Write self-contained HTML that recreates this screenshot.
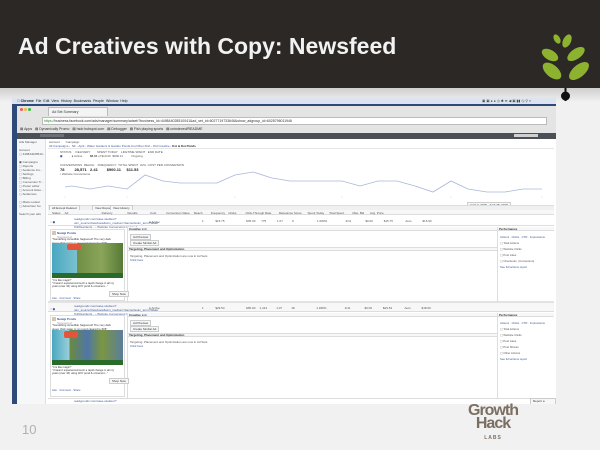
<!DOCTYPE html>
<html><head><meta charset="utf-8"><style>
*{margin:0;padding:0;box-sizing:border-box}
body{width:600px;height:450px;overflow:hidden;background:#f1f1f1;font-family:"Liberation Sans",sans-serif;position:relative}
.a{position:absolute}
.t{font-size:3.5px;color:#555;white-space:nowrap}
.b{color:#3b5998}
.btn{border:1px solid #ccc;background:#f6f7f8;font-size:3px;padding:0 2px;color:#333}
</style></head><body>
<div class="a" style="left:0;top:0;width:600px;height:88px;background:#2c2825"></div>
<div class="a" style="left:0;top:88px;width:600px;height:14px;background:linear-gradient(#cfcfcf,#f1f1f1)"></div>
<div class="a" style="left:18px;top:33px;font-size:23px;font-weight:bold;color:#f2f2f2">Ad Creatives with Copy: Newsfeed</div>
<svg class="a" style="left:536px;top:28px" width="60" height="76" viewBox="0 0 60 76">
<ellipse cx="21" cy="11" rx="3" ry="5" transform="rotate(-30 21 11)" fill="#8cb22f"/>
<ellipse cx="31" cy="13" rx="4" ry="7" transform="rotate(25 31 13)" fill="#8cb22f"/>
<ellipse cx="14" cy="27" rx="9" ry="5" transform="rotate(30 14 27)" fill="#8cb22f"/>
<ellipse cx="40" cy="26" rx="10" ry="5" transform="rotate(-35 40 26)" fill="#8cb22f"/>
<ellipse cx="16" cy="43" rx="11" ry="6" transform="rotate(40 16 43)" fill="#8cb22f"/>
<ellipse cx="43" cy="43" rx="12" ry="6" transform="rotate(-40 43 43)" fill="#8cb22f"/>
<rect x="28.5" y="60" width="2" height="13" fill="#111"/>
<circle cx="29.5" cy="68" r="4.5" fill="#111"/>
</svg>
<div class="a" style="left:12px;top:98px;width:544px;height:306px;background:#fff;overflow:hidden">
 <div class="a" style="left:0;top:0;width:544px;height:6px;background:#dde3ef"></div>
 <div class="a t" style="left:5px;top:1px;font-size:3.5px;color:#222">&#63743; <b>Chrome</b> &nbsp;File &nbsp;Edit &nbsp;View &nbsp;History &nbsp;Bookmarks &nbsp;People &nbsp;Window &nbsp;Help</div>
 <div class="a t" style="left:470px;top:1px;color:#444">▣ ▣ ● ● ◷ ✱ ≋ ◀ ▣ ▮▮ ◷ ⚲ ≡</div>
 <div class="a" style="left:0;top:6px;width:544px;height:2px;background:#2e4a78"></div>
 <div class="a" style="left:0;top:8px;width:5px;height:298px;background:#2e4a78"></div>
 <div class="a" style="left:5px;top:8px;width:539px;height:27px;background:#e4e4e4"></div>
 <div class="a" style="left:8px;top:10px;width:3px;height:3px;border-radius:50%;background:#f15c55"></div>
 <div class="a" style="left:12px;top:10px;width:3px;height:3px;border-radius:50%;background:#f8b830"></div>
 <div class="a" style="left:16px;top:10px;width:3px;height:3px;border-radius:50%;background:#2cc23f"></div>
 <div class="a" style="left:36px;top:9px;width:60px;height:9px;background:#f4f4f4;border:1px solid #bbb;border-bottom:none"></div>
 <div class="a t" style="left:40px;top:12px;color:#333">Ad Set Summary</div>
 <div class="a" style="left:30px;top:19px;width:505px;height:8px;background:#fff;border:1px solid #bbb"></div>
 <div class="a t" style="left:32px;top:21px;color:#333"><span style="color:#2a8a2a">https://</span>business.facebook.com/ads/manager/summary/adset/?business_id=449844028510041&amp;ad_set_id=6027719733646&amp;show_adgroup_id=6028796011946</div>
 <div class="a t" style="left:8px;top:29px;color:#333">▤ Apps &nbsp; ▤ Dynamically Promo &nbsp; ▤ hsdr.hubspot.com &nbsp; ▤ Debugger &nbsp; ▤ Fish playing sports &nbsp; ▤ unindexed/README</div>
 <div class="a" style="left:5px;top:35px;width:539px;height:6px;background:#4b4f56"></div>
 <div class="a" style="left:28px;top:36px;width:24px;height:3px;background:#6b6f76"></div>
 <div class="a" style="left:502px;top:36px;width:24px;height:3px;background:#d0d0d0"></div>
 <div class="a" style="left:5px;top:41px;width:29px;height:265px;background:#f6f7f9;border-right:1px solid #dfe0e4"></div>
 <div class="a t" style="left:7px;top:42px;font-size:3px">Ads Manager<br><br>Account<br>▢ 449844028510...<br><br>▣ Campaigns<br>▢ Reports<br>▢ Audience Ins...<br>▢ Settings<br>▢ Billing<br>▢ Conversion Tr...<br>▢ Power editor<br>▢ Account Histo...<br>▢ Audiences<br><br>▢ Mass Lookal<br>▢ Advertiser Su<br><br>Search your ads</div>
 <div class="a t" style="left:37px;top:42px;font-size:3px">Account &nbsp;&nbsp;&nbsp;&nbsp;&nbsp;&nbsp;Campaign<br><span class="b">All Campaigns › &nbsp;NF - April - Water Gardens &amp; Garden Ponds,Koi,Other Fish - Old Creative ›</span> <b style="color:#222">Koi &amp; Koi Ponds</b></div>
 <div class="a" style="left:36px;top:50px;width:506px;height:1px;background:#e5e5e5"></div>
 <div class="a t" style="left:48px;top:52px;font-size:3px">STATUS &nbsp;&nbsp;&nbsp;&nbsp;DELIVERY &nbsp;&nbsp;&nbsp;&nbsp;&nbsp;&nbsp;&nbsp;SPENT TODAY &nbsp;&nbsp;&nbsp;LIFETIME SPENT &nbsp;&nbsp;END DATE<br><span style="color:#3b5998">◼</span> &nbsp;&nbsp;&nbsp;&nbsp;&nbsp;&nbsp;&nbsp;&nbsp;&nbsp;&nbsp;● Active &nbsp;&nbsp;&nbsp;&nbsp;&nbsp;&nbsp;&nbsp;&nbsp;<b>$8.04</b> of $10.00 &nbsp;$900.11 &nbsp;&nbsp;&nbsp;&nbsp;&nbsp;&nbsp;&nbsp;&nbsp;&nbsp;Ongoing</div>
 <div class="a t" style="left:48px;top:65px;font-size:3px">CONVERSIONS &nbsp;REACH &nbsp;&nbsp;&nbsp;FREQUENCY &nbsp;TOTAL SPENT &nbsp;AVG. COST PER CONVERSION<br><b style="font-size:4px;color:#222">78 &nbsp;&nbsp;&nbsp;&nbsp;&nbsp;&nbsp;&nbsp;&nbsp;28,571 &nbsp;&nbsp;2.41 &nbsp;&nbsp;&nbsp;&nbsp;&nbsp;&nbsp;&nbsp;$900.11 &nbsp;&nbsp;&nbsp;&nbsp;$11.53</b><br>• Website Conversions</div>
 <div class="a btn" style="left:455px;top:104px">April 2, 2015 - April 28, 2015</div>
 <svg class="a" style="left:0;top:0" width="544" height="306">
  <polyline fill="none" stroke="#a9b6da" stroke-width="0.8" points="53,89 60,88 78,91 96,88 115,91 133,77 151,83 168,85 186,85 205,85 223,77 241,74 260,80 278,83 288,83 313,83 330,83 348,88 366,83 385,83 403,88 421,94 439,83 456,91 475,94 493,94 511,91 530,91"/>
  <g fill="#ccc"><circle cx="53" cy="99" r=".5"/><circle cx="115" cy="99" r=".5"/><circle cx="223" cy="99" r=".5"/><circle cx="330" cy="99" r=".5"/><circle cx="439" cy="99" r=".5"/><circle cx="530" cy="99" r=".5"/></g>
 </svg>
 <div class="a" style="left:36px;top:107px;width:506px;height:5px;background:#f0f0f0;border-top:1px solid #ddd"></div>
 <div class="a btn" style="left:37px;top:107px">All Except Deleted</div>
 <div class="a btn" style="left:80px;top:107px">View Report</div>
 <div class="a btn" style="left:98px;top:107px">View History</div>
 <div class="a" style="left:36px;top:112px;width:506px;height:5px;background:#f6f7f8;border-bottom:1px solid #ddd"></div>
 <div class="a t" style="left:40px;top:112.5px;font-size:3px">Status &nbsp;&nbsp;&nbsp;&nbsp;Ad &nbsp;&nbsp;&nbsp;&nbsp;&nbsp;&nbsp;&nbsp;&nbsp;&nbsp;&nbsp;&nbsp;&nbsp;&nbsp;&nbsp;&nbsp;&nbsp;&nbsp;&nbsp;&nbsp;&nbsp;&nbsp;&nbsp;&nbsp;&nbsp;&nbsp;&nbsp;&nbsp;&nbsp;&nbsp;&nbsp;&nbsp;&nbsp;&nbsp;&nbsp;&nbsp;&nbsp;&nbsp;&nbsp;&nbsp;Delivery &nbsp;&nbsp;&nbsp;&nbsp;&nbsp;&nbsp;&nbsp;&nbsp;&nbsp;&nbsp;&nbsp;&nbsp;&nbsp;&nbsp;&nbsp;&nbsp;&nbsp;Results &nbsp;&nbsp;&nbsp;&nbsp;&nbsp;&nbsp;&nbsp;&nbsp;&nbsp;&nbsp;&nbsp;&nbsp;&nbsp;&nbsp;Cost &nbsp;&nbsp;&nbsp;&nbsp;&nbsp;&nbsp;&nbsp;&nbsp;&nbsp;&nbsp;&nbsp;Conversion Value &nbsp;&nbsp;&nbsp;&nbsp;Reach &nbsp;&nbsp;&nbsp;&nbsp;&nbsp;&nbsp;&nbsp;&nbsp;&nbsp;Frequency &nbsp;&nbsp;&nbsp;Clicks &nbsp;&nbsp;&nbsp;&nbsp;&nbsp;&nbsp;&nbsp;&nbsp;&nbsp;&nbsp;Click-Through Rate &nbsp;&nbsp;&nbsp;&nbsp;&nbsp;&nbsp;&nbsp;&nbsp;Relevance Score &nbsp;&nbsp;&nbsp;&nbsp;&nbsp;&nbsp;Spent Today &nbsp;&nbsp;&nbsp;&nbsp;&nbsp;Total Spent &nbsp;&nbsp;&nbsp;&nbsp;&nbsp;&nbsp;&nbsp;&nbsp;&nbsp;Max. Bid &nbsp;&nbsp;&nbsp;&nbsp;&nbsp;&nbsp;Avg. Price</div>
 <div class="a" style="left:36px;top:118px;width:506px;height:10px;border-bottom:1px solid #ddd"></div>
 <div class="a t b" style="left:62px;top:119px;font-size:3px">readypondz.com/case-studies/?<br>utm_source=facebook&amp;utm_medium=banner&amp;utm_term=Water<br>%20Garden&amp;... › Website Conversions Image 2</div>
 <div class="a t" style="left:38px;top:122px;font-size:3px">○ <span class="b">◼</span></div>
 <div class="a t" style="left:137px;top:122px;font-size:3px">● Active</div>
 <div class="a t" style="left:190px;top:121px;font-size:3px">1 &nbsp;&nbsp;&nbsp;&nbsp;&nbsp;&nbsp;&nbsp;&nbsp;&nbsp;&nbsp;&nbsp;&nbsp;&nbsp;$15.75 &nbsp;&nbsp;&nbsp;&nbsp;&nbsp;&nbsp;&nbsp;&nbsp;&nbsp;&nbsp;&nbsp;&nbsp;&nbsp;&nbsp;&nbsp;&nbsp;&nbsp;&nbsp;&nbsp;&nbsp;&nbsp;&nbsp;&nbsp;&nbsp;&nbsp;$35.00 &nbsp;&nbsp;&nbsp;&nbsp;&nbsp;&nbsp;775 &nbsp;&nbsp;&nbsp;&nbsp;&nbsp;&nbsp;&nbsp;&nbsp;&nbsp;&nbsp;&nbsp;&nbsp;1.07 &nbsp;&nbsp;&nbsp;&nbsp;&nbsp;&nbsp;&nbsp;&nbsp;&nbsp;&nbsp;9 &nbsp;&nbsp;&nbsp;&nbsp;&nbsp;&nbsp;&nbsp;&nbsp;&nbsp;&nbsp;&nbsp;&nbsp;&nbsp;&nbsp;&nbsp;&nbsp;&nbsp;&nbsp;&nbsp;&nbsp;&nbsp;&nbsp;&nbsp;&nbsp;&nbsp;&nbsp;&nbsp;1.083% &nbsp;&nbsp;&nbsp;&nbsp;&nbsp;&nbsp;&nbsp;&nbsp;&nbsp;&nbsp;&nbsp;&nbsp;&nbsp;&nbsp;&nbsp;&nbsp;&nbsp;&nbsp;&nbsp;&nbsp;&nbsp;3/11 &nbsp;&nbsp;&nbsp;&nbsp;&nbsp;&nbsp;&nbsp;&nbsp;&nbsp;&nbsp;&nbsp;&nbsp;&nbsp;&nbsp;&nbsp;&nbsp;$0.00 &nbsp;&nbsp;&nbsp;&nbsp;&nbsp;&nbsp;&nbsp;&nbsp;&nbsp;&nbsp;&nbsp;&nbsp;$15.75 &nbsp;&nbsp;&nbsp;&nbsp;&nbsp;&nbsp;&nbsp;&nbsp;&nbsp;&nbsp;&nbsp;&nbsp;&nbsp;&nbsp;Auto &nbsp;&nbsp;&nbsp;&nbsp;&nbsp;&nbsp;&nbsp;&nbsp;&nbsp;&nbsp;&nbsp;&nbsp;$15.90</div>
 <div class="a" style="left:36px;top:129px;width:506px;height:76px;border-bottom:2px solid #e3e3e3"></div>
 <div class="a" style="left:115px;top:129px;width:1px;height:76px;background:#ddd"></div>
 <div class="a" style="left:485px;top:129px;width:1px;height:76px;background:#ddd"></div>
 <div class="a" style="left:116px;top:129px;width:369px;height:4px;background:#f6f7f8;border-bottom:1px solid #ddd"></div>
 <div class="a t" style="left:117px;top:129px;font-size:3px;color:#333"><b>Creative</b> <span class="b">Edit</span></div>
 <div class="a btn" style="left:118px;top:136px">Ad Preview</div>
 <div class="a btn" style="left:118px;top:142px">Create Similar Ad</div>
 <div class="a" style="left:116px;top:149px;width:369px;height:4px;background:#f6f7f8;border-bottom:1px solid #ddd;border-top:1px solid #ddd"></div>
 <div class="a t" style="left:117px;top:149px;font-size:3px;color:#333"><b>Targeting, Placement and Optimization</b></div>
 <div class="a t" style="left:118px;top:156px;font-size:3px">Targeting, Placement and Optimization are now in Ad Sets<br><span class="b">Click here</span></div>
 <div class="a" style="left:486px;top:129px;width:56px;height:4px;background:#f6f7f8;border-bottom:1px solid #ddd"></div>
 <div class="a t" style="left:487px;top:129px;font-size:3px;color:#333"><b>Performance</b></div>
 <div class="a t" style="left:488px;top:136px;font-size:2.8px;line-height:6px"><span class="b">Actions · Clicks · CTR · Impressions</span><br>▢ Total Actions<br>▢ Website Clicks<br>▢ Post Likes<br>▢ Checkouts &nbsp;(Conversion)<br><span class="b">See full actions report</span></div>
 <div class="a" style="left:38px;top:131px;width:75px;height:72px;border:1px solid #ddd;background:#fff"></div>
 <div class="a" style="left:40px;top:133px;width:4px;height:4px;background:#d8c4b0"></div>
 <div class="a t b" style="left:45px;top:133px;font-size:3px"><b>Nualgi Ponds</b><br><span style="color:#999">Sponsored</span></div>
 <div class="a t" style="left:40px;top:139px;font-size:2.8px;color:#333">"Something incredible happened! The very dark<br>green thick water in my pond cleared to 60ft"</div>
 <div class="a" style="left:40px;top:145px;width:71px;height:35px;background:linear-gradient(90deg,#49a7c0 0,#7cc0d0 35%,#6f8f45 35%,#8aa55a 70%,#567a36 100%)"></div>
 <div class="a" style="left:40px;top:175px;width:71px;height:5px;background:#2a6a2a"></div>
 <div class="a" style="left:55px;top:146px;width:14px;height:6px;background:#e2553a;border-radius:2px"></div>
 <div class="a t" style="left:40px;top:181px;font-size:2.7px;color:#333">"It is like magic!"<br>"I haven't experienced such a rapid change in all my<br>years (over 16) using ANY pond &amp; ornament..."</div>
 <div class="a btn" style="left:97px;top:193px">Shop Now</div>
 <div class="a t b" style="left:40px;top:199px;font-size:2.7px">Like · Comment · Share</div>
 <div class="a" style="left:36px;top:205px;width:506px;height:9px;background:#f7f7f7;border-bottom:1px solid #ddd"></div>
 <div class="a t b" style="left:62px;top:205.5px;font-size:3px">readypondz.com/case-studies/?<br>utm_source=facebook&amp;utm_medium=banner&amp;utm_term=Water<br>%20Garden&amp;... › Website Conversions Image 14</div>
 <div class="a t" style="left:38px;top:209px;font-size:3px">○ <span class="b">◼</span></div>
 <div class="a t" style="left:137px;top:208px;font-size:3px">● Active</div>
 <div class="a t" style="left:190px;top:208px;font-size:3px">1 &nbsp;&nbsp;&nbsp;&nbsp;&nbsp;&nbsp;&nbsp;&nbsp;&nbsp;&nbsp;&nbsp;&nbsp;&nbsp;$29.54 &nbsp;&nbsp;&nbsp;&nbsp;&nbsp;&nbsp;&nbsp;&nbsp;&nbsp;&nbsp;&nbsp;&nbsp;&nbsp;&nbsp;&nbsp;&nbsp;&nbsp;&nbsp;&nbsp;&nbsp;&nbsp;&nbsp;&nbsp;&nbsp;&nbsp;$65.00 &nbsp;&nbsp;&nbsp;&nbsp;1,413 &nbsp;&nbsp;&nbsp;&nbsp;&nbsp;&nbsp;&nbsp;&nbsp;&nbsp;&nbsp;1.07 &nbsp;&nbsp;&nbsp;&nbsp;&nbsp;&nbsp;&nbsp;&nbsp;&nbsp;&nbsp;18 &nbsp;&nbsp;&nbsp;&nbsp;&nbsp;&nbsp;&nbsp;&nbsp;&nbsp;&nbsp;&nbsp;&nbsp;&nbsp;&nbsp;&nbsp;&nbsp;&nbsp;&nbsp;&nbsp;&nbsp;&nbsp;&nbsp;&nbsp;&nbsp;&nbsp;1.189% &nbsp;&nbsp;&nbsp;&nbsp;&nbsp;&nbsp;&nbsp;&nbsp;&nbsp;&nbsp;&nbsp;&nbsp;&nbsp;&nbsp;&nbsp;&nbsp;&nbsp;&nbsp;&nbsp;&nbsp;&nbsp;4/11 &nbsp;&nbsp;&nbsp;&nbsp;&nbsp;&nbsp;&nbsp;&nbsp;&nbsp;&nbsp;&nbsp;&nbsp;&nbsp;&nbsp;&nbsp;&nbsp;$0.00 &nbsp;&nbsp;&nbsp;&nbsp;&nbsp;&nbsp;&nbsp;&nbsp;&nbsp;&nbsp;&nbsp;&nbsp;$29.54 &nbsp;&nbsp;&nbsp;&nbsp;&nbsp;&nbsp;&nbsp;&nbsp;&nbsp;&nbsp;&nbsp;&nbsp;&nbsp;&nbsp;Auto &nbsp;&nbsp;&nbsp;&nbsp;&nbsp;&nbsp;&nbsp;&nbsp;&nbsp;&nbsp;&nbsp;&nbsp;$18.60</div>
 <div class="a" style="left:36px;top:215px;width:506px;height:86px;border-bottom:1px solid #ddd"></div>
 <div class="a" style="left:115px;top:215px;width:1px;height:86px;background:#ddd"></div>
 <div class="a" style="left:485px;top:215px;width:1px;height:86px;background:#ddd"></div>
 <div class="a" style="left:116px;top:215px;width:369px;height:4px;background:#f6f7f8;border-bottom:1px solid #ddd"></div>
 <div class="a t" style="left:117px;top:215px;font-size:3px;color:#333"><b>Creative</b> <span class="b">Edit</span></div>
 <div class="a btn" style="left:118px;top:222px">Ad Preview</div>
 <div class="a btn" style="left:118px;top:228px">Create Similar Ad</div>
 <div class="a" style="left:116px;top:235px;width:369px;height:4px;background:#f6f7f8;border-bottom:1px solid #ddd;border-top:1px solid #ddd"></div>
 <div class="a t" style="left:117px;top:235px;font-size:3px;color:#333"><b>Targeting, Placement and Optimization</b></div>
 <div class="a t" style="left:118px;top:242px;font-size:3px">Targeting, Placement and Optimization are now in Ad Sets<br><span class="b">Click here</span></div>
 <div class="a" style="left:486px;top:215px;width:56px;height:4px;background:#f6f7f8;border-bottom:1px solid #ddd"></div>
 <div class="a t" style="left:487px;top:215px;font-size:3px;color:#333"><b>Performance</b></div>
 <div class="a t" style="left:488px;top:222px;font-size:2.8px;line-height:6px"><span class="b">Actions · Clicks · CTR · Impressions</span><br>▢ Total Actions<br>▢ Website Clicks<br>▢ Post Likes<br>▢ Post Shares<br>▢ Other Actions<br><span class="b">See full actions report</span></div>
 <div class="a" style="left:38px;top:217px;width:75px;height:82px;border:1px solid #ddd;background:#fff"></div>
 <div class="a" style="left:40px;top:219px;width:4px;height:4px;background:#d8c4b0"></div>
 <div class="a t b" style="left:45px;top:219px;font-size:3px"><b>Nualgi Ponds</b><br><span style="color:#999">Sponsored</span></div>
 <div class="a t" style="left:40px;top:225px;font-size:2.8px;color:#333">"Something incredible happened! The very dark<br>green thick water in my pond cleared to 60ft"</div>
 <div class="a" style="left:40px;top:232px;width:71px;height:35px;background:linear-gradient(90deg,#49a7c0 0,#9ad0dc 25%,#6b8a3e 25%,#4f76a8 50%,#7a9640 70%,#5b7d9c 100%)"></div>
 <div class="a" style="left:40px;top:262px;width:71px;height:5px;background:#2a6a2a"></div>
 <div class="a" style="left:52px;top:233px;width:14px;height:7px;background:#e2553a;border-radius:2px"></div>
 <div class="a t" style="left:40px;top:268px;font-size:2.7px;color:#333">"It is like magic!"<br>"I haven't experienced such a rapid change in all my<br>years (over 16) using ANY pond &amp; ornament..."</div>
 <div class="a btn" style="left:97px;top:280px">Shop Now</div>
 <div class="a t b" style="left:40px;top:291px;font-size:2.7px">Like · Comment · Share</div>
 <div class="a t b" style="left:62px;top:301px;font-size:3px">readypondz.com/case-studies/?</div>
 <div class="a btn" style="left:518px;top:300px">Report a Problem</div>
</div>
<div class="a" style="left:22px;top:422px;font-size:13px;color:#b0b0b0">10</div>
<div class="a" style="left:464px;top:404px;width:58px;text-align:center;font-size:16px;font-weight:bold;line-height:13px;color:#7b6f62;letter-spacing:-1px">Growth<br>Hack</div>
<div class="a" style="left:464px;top:435px;width:58px;text-align:center;font-size:5px;font-weight:bold;color:#7b6f62;letter-spacing:1px">LABS</div>
</body></html>
